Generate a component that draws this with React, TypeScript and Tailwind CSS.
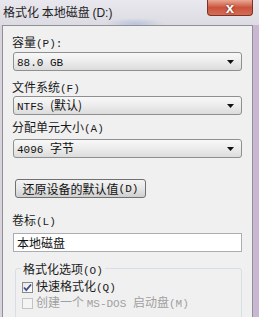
import React from "react";

const mono = "font-['Liberation_Mono',monospace] text-[11px]";

function Label({ children, className = "" }: { children: React.ReactNode; className?: string }) {
  return <div className={"ml-[9px] h-[16px] leading-[16px] text-[12px] text-[#1b1b1b] " + className}>{children}</div>;
}

function Select({ children, className = "" }: { children: React.ReactNode; className?: string }) {
  return (
    <div
      className={
        "ml-[10px] w-[229px] h-[19px] rounded-[3px] border border-[#8e8f8f] bg-gradient-to-b from-[#f8f8f8] via-[#ececec] to-[#dcdcdc] flex items-center justify-between pl-[3px] pr-[7px] text-[12px] text-[#111] " +
        className
      }
    >
      <span className="leading-[16px]">{children}</span>
      <svg width="7" height="4" viewBox="0 0 7 4">
        <path d="M0 0h7L3.5 4z" fill="#111" />
      </svg>
    </div>
  );
}

function Check({ checked, disabled }: { checked?: boolean; disabled?: boolean }) {
  return (
    <span
      className={
        "w-[11px] h-[11px] border flex items-center justify-center " +
        (disabled ? "border-[#c4c4c4] bg-[#f4f4f4]" : "border-[#8a8a8a] bg-gradient-to-br from-[#e6e6e6] to-[#ffffff]")
      }
    >
      {checked && (
        <svg width="9" height="9" viewBox="0 0 9 9">
          <path d="M1 4.5l2.3 2.6L8 1.5" stroke="#3d4f86" strokeWidth="1.8" fill="none" />
        </svg>
      )}
    </span>
  );
}

export default function App() {
  return (
    <div className="w-[259px] h-[317px] overflow-hidden flex flex-col bg-gradient-to-r from-[#d9d3dd] via-[#dcd8e2] to-[#c8b6d2] font-['Noto_Sans_CJK_SC',sans-serif]">
      {/* title bar */}
      <div className="h-[25px] shrink-0 flex justify-between bg-[radial-gradient(ellipse_30px_6px_at_135px_24px,#b8c4dc,transparent),linear-gradient(to_bottom,#e9e8ee,#dcdbe3)]">
        <div className="pl-[3px] pt-[4px] text-[12px] leading-[16px] text-[#1e1e1e]">
          格式化 本地磁盘 <span className="font-['Liberation_Sans',sans-serif] text-[12px]">(D:)</span>
        </div>
        <div className="mr-[6px] w-[46px] h-[16px] rounded-b-[4px] border border-t-0 border-[#7a3328] bg-gradient-to-b from-[#eaa896] via-[#c9533c] to-[#d66c55] flex items-center justify-center">
          <span className="text-[15px] leading-[14px] font-bold text-white font-['Liberation_Sans',sans-serif] [text-shadow:0_0_2px_#5a1a10]">x</span>
        </div>
      </div>

      {/* client panel */}
      <div className="ml-[2px] w-[251px] flex-1 border-t border-l border-r border-[#8f9194] bg-[#f0f0f0] pt-[8px]">
        <Label>
          容量<span className={mono}>(P):</span>
        </Label>
        <Select className="mt-[2px]">
          <span className={mono}>88.0 GB</span>
        </Select>

        <Label className="mt-[8px]">
          文件系统<span className={mono}>(F)</span>
        </Label>
        <Select className="mt-[1px]">
          <span className={mono}>NTFS </span>(默认)
        </Select>

        <Label className="mt-[4px]">
          分配单元大小<span className={mono}>(A)</span>
        </Label>
        <Select className="mt-[4px]">
          <span className={mono}>4096 </span>字节
        </Select>

        <div className="mt-[21px] ml-[12px] w-[131px] h-[19px] rounded-[3px] border border-[#707070] bg-gradient-to-b from-[#f4f4f4] via-[#e6e6e6] to-[#cfcfcf] flex items-center justify-center text-[12px] text-[#111] leading-[16px]">
          还原设备的默认值<span className={mono}>(D)</span>
        </div>

        <Label className="mt-[14px]">
          卷标<span className={mono}>(L)</span>
        </Label>
        <div className="mt-[5px] ml-[10px] w-[229px] h-[19px] border border-[#abadb3] bg-white pl-[3px] text-[12px] leading-[17px] text-[#111]">
          本地磁盘
        </div>

        <div className="relative mt-[16px] ml-[12px] w-[227px] h-[60px] rounded-[3px] border border-[#d5dfe5] pt-[10px]">
          <span className="absolute -top-[8px] left-[5px] px-[2px] bg-[#f0f0f0] text-[12px] leading-[16px] text-[#1b1b1b]">
            格式化选项<span className={mono}>(O)</span>
          </span>
          <div className="ml-[6px] h-[16px] flex items-center gap-[3px] text-[12px] text-[#1b1b1b]">
            <Check checked />
            <span>
              快速格式化<span className={mono}>(Q)</span>
            </span>
          </div>
          <div className="ml-[6px] h-[16px] flex items-center gap-[3px] text-[12px] text-[#a0a0a0]">
            <Check disabled />
            <span>
              创建一个 <span className={mono}>MS-DOS </span>启动盘<span className={mono}>(M)</span>
            </span>
          </div>
        </div>
      </div>
    </div>
  );
}
